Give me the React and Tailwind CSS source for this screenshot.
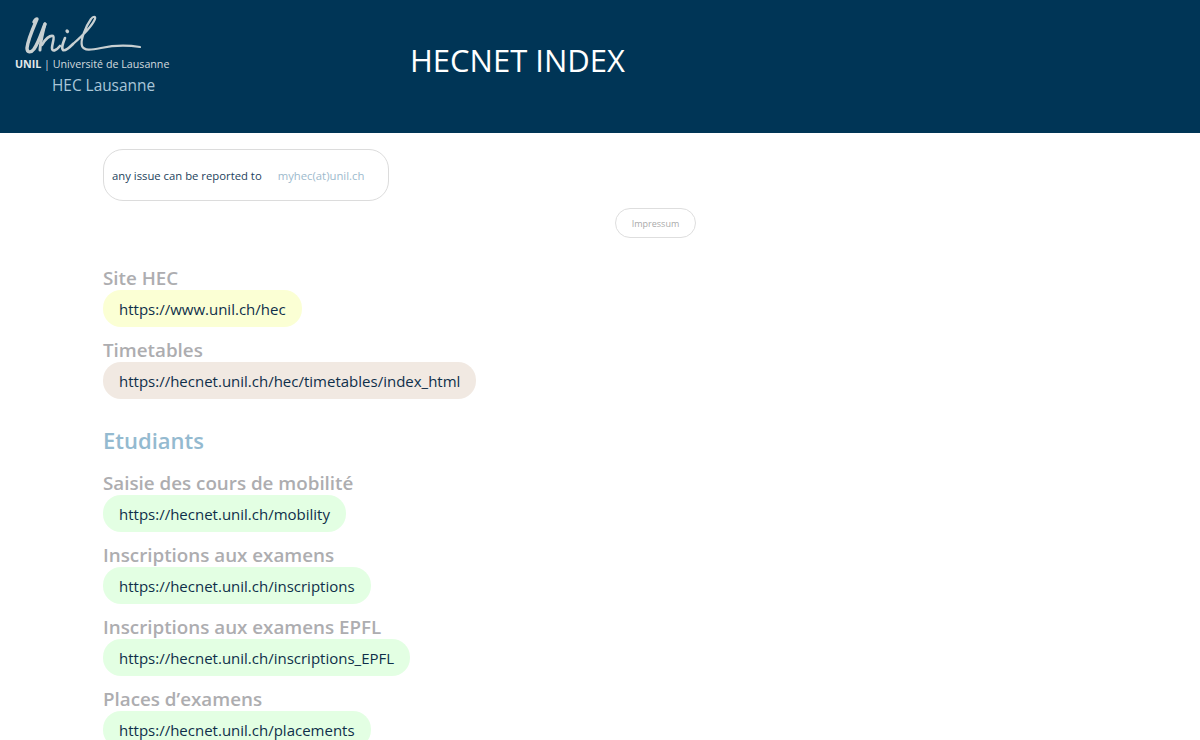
import React from 'react';

const font = "font-['Open_Sans','Noto_Sans',sans-serif]";

const Logo = () => (
  <div className="w-[175px]">
    <svg width="135" height="47" viewBox="0 -2 135 47" fill="none" className="ml-[15px] block">
      <g stroke="#c8d0d2" strokeLinecap="round" strokeLinejoin="round">
        <path d="M19 10 C20 8 21 7 22 7 C19 14 13 27 12 36 C12 41 16 41 19 37 C24 30 27 19 30 12" strokeWidth="3.4" />
        <path d="M30 12 C28 20 25 32 25 38" strokeWidth="3" />
        <path d="M27 33 C30 27 35 23 38 24 C40 25 37 32 37 36 C37 40 41 39 45 34" strokeWidth="2.6" />
        <path d="M50 26 C48 31 46 36 48 38 C50 39 54 36 58 32" strokeWidth="2.6" />
        <path d="M52 19 L52.5 19.5" strokeWidth="3.2" />
        <path d="M58 32 C66 25 77 14 80 7 C81 4 78 4 76 7 C71 14 65 28 67 34 C69 39 76 38 86 36 C100 33 112 33 125 35" strokeWidth="2.2" />
      </g>
    </svg>
    <div className="pl-[15px] text-[10.7px] leading-[14px] text-[#d3dade] whitespace-nowrap">
      <span className="font-bold text-[#e4e9eb]">UNIL</span> | Université de Lausanne
    </div>
    <div className="mt-[5px] pl-[52px] text-[15.4px] leading-[20px] text-[#a9c6d8] whitespace-nowrap">HEC Lausanne</div>
  </div>
);

const Entry = ({ title, url, color }) => (
  <div>
    <h3 className="h-[35px] pt-[10px] text-[18.8px] leading-[26px] font-semibold text-[#adadb0]">{title}</h3>
    <a className={`inline-flex h-[37px] items-center rounded-[18px] px-4 pt-[1px] text-[15px] text-[#0f2f4a] ${color}`}>{url}</a>
  </div>
);

const App = () => {
  const students = [
    ['Saisie des cours de mobilité', 'https://hecnet.unil.ch/mobility'],
    ['Inscriptions aux examens', 'https://hecnet.unil.ch/inscriptions'],
    ['Inscriptions aux examens EPFL', 'https://hecnet.unil.ch/inscriptions_EPFL'],
    ['Places d’examens', 'https://hecnet.unil.ch/placements'],
  ];

  return (
    <div className={`h-[740px] overflow-hidden bg-white ${font}`}>
      <header className="flex h-[133px] bg-[#003556]">
        <div className="pt-[10px]"><Logo /></div>
        <h1 className="ml-[235px] pt-[40px] text-[31px] leading-[40px] text-white">HECNET INDEX</h1>
      </header>

      <main className="pl-[103px]">
        <div className="mt-4 flex h-[52px] w-[286px] items-center rounded-[20px] border border-[#dcdcdc] pl-2 pt-[2px] text-[11.3px] text-[#1d3f5c]">
          <span>any issue can be reported to</span>
          <a className="ml-4 text-[#9dbacd]">myhec(at)unil.ch</a>
        </div>
        <div className="mt-[7px] ml-[512px] flex h-[30px] w-[81px] items-center justify-center rounded-[15px] border border-[#dedede] pt-[1px] text-[9px] text-[#aaaaaa]">
          Impressum
        </div>

        <div className="mt-[17px]">
          <Entry title="Site HEC" url="https://www.unil.ch/hec" color="bg-[#fbffd4]" />
          <Entry title="Timetables" url="https://hecnet.unil.ch/hec/timetables/index_html" color="bg-[#f1e9e2]" />
        </div>

        <h2 className="mt-[25px] h-[36px] text-[22px] leading-[32px] font-semibold text-[#94bad0]">Etudiants</h2>

        <div>
          {students.map(([title, url]) => (
            <Entry key={url} title={title} url={url} color="bg-[#e3ffe3]" />
          ))}
        </div>
      </main>
    </div>
  );
};

export default App;
